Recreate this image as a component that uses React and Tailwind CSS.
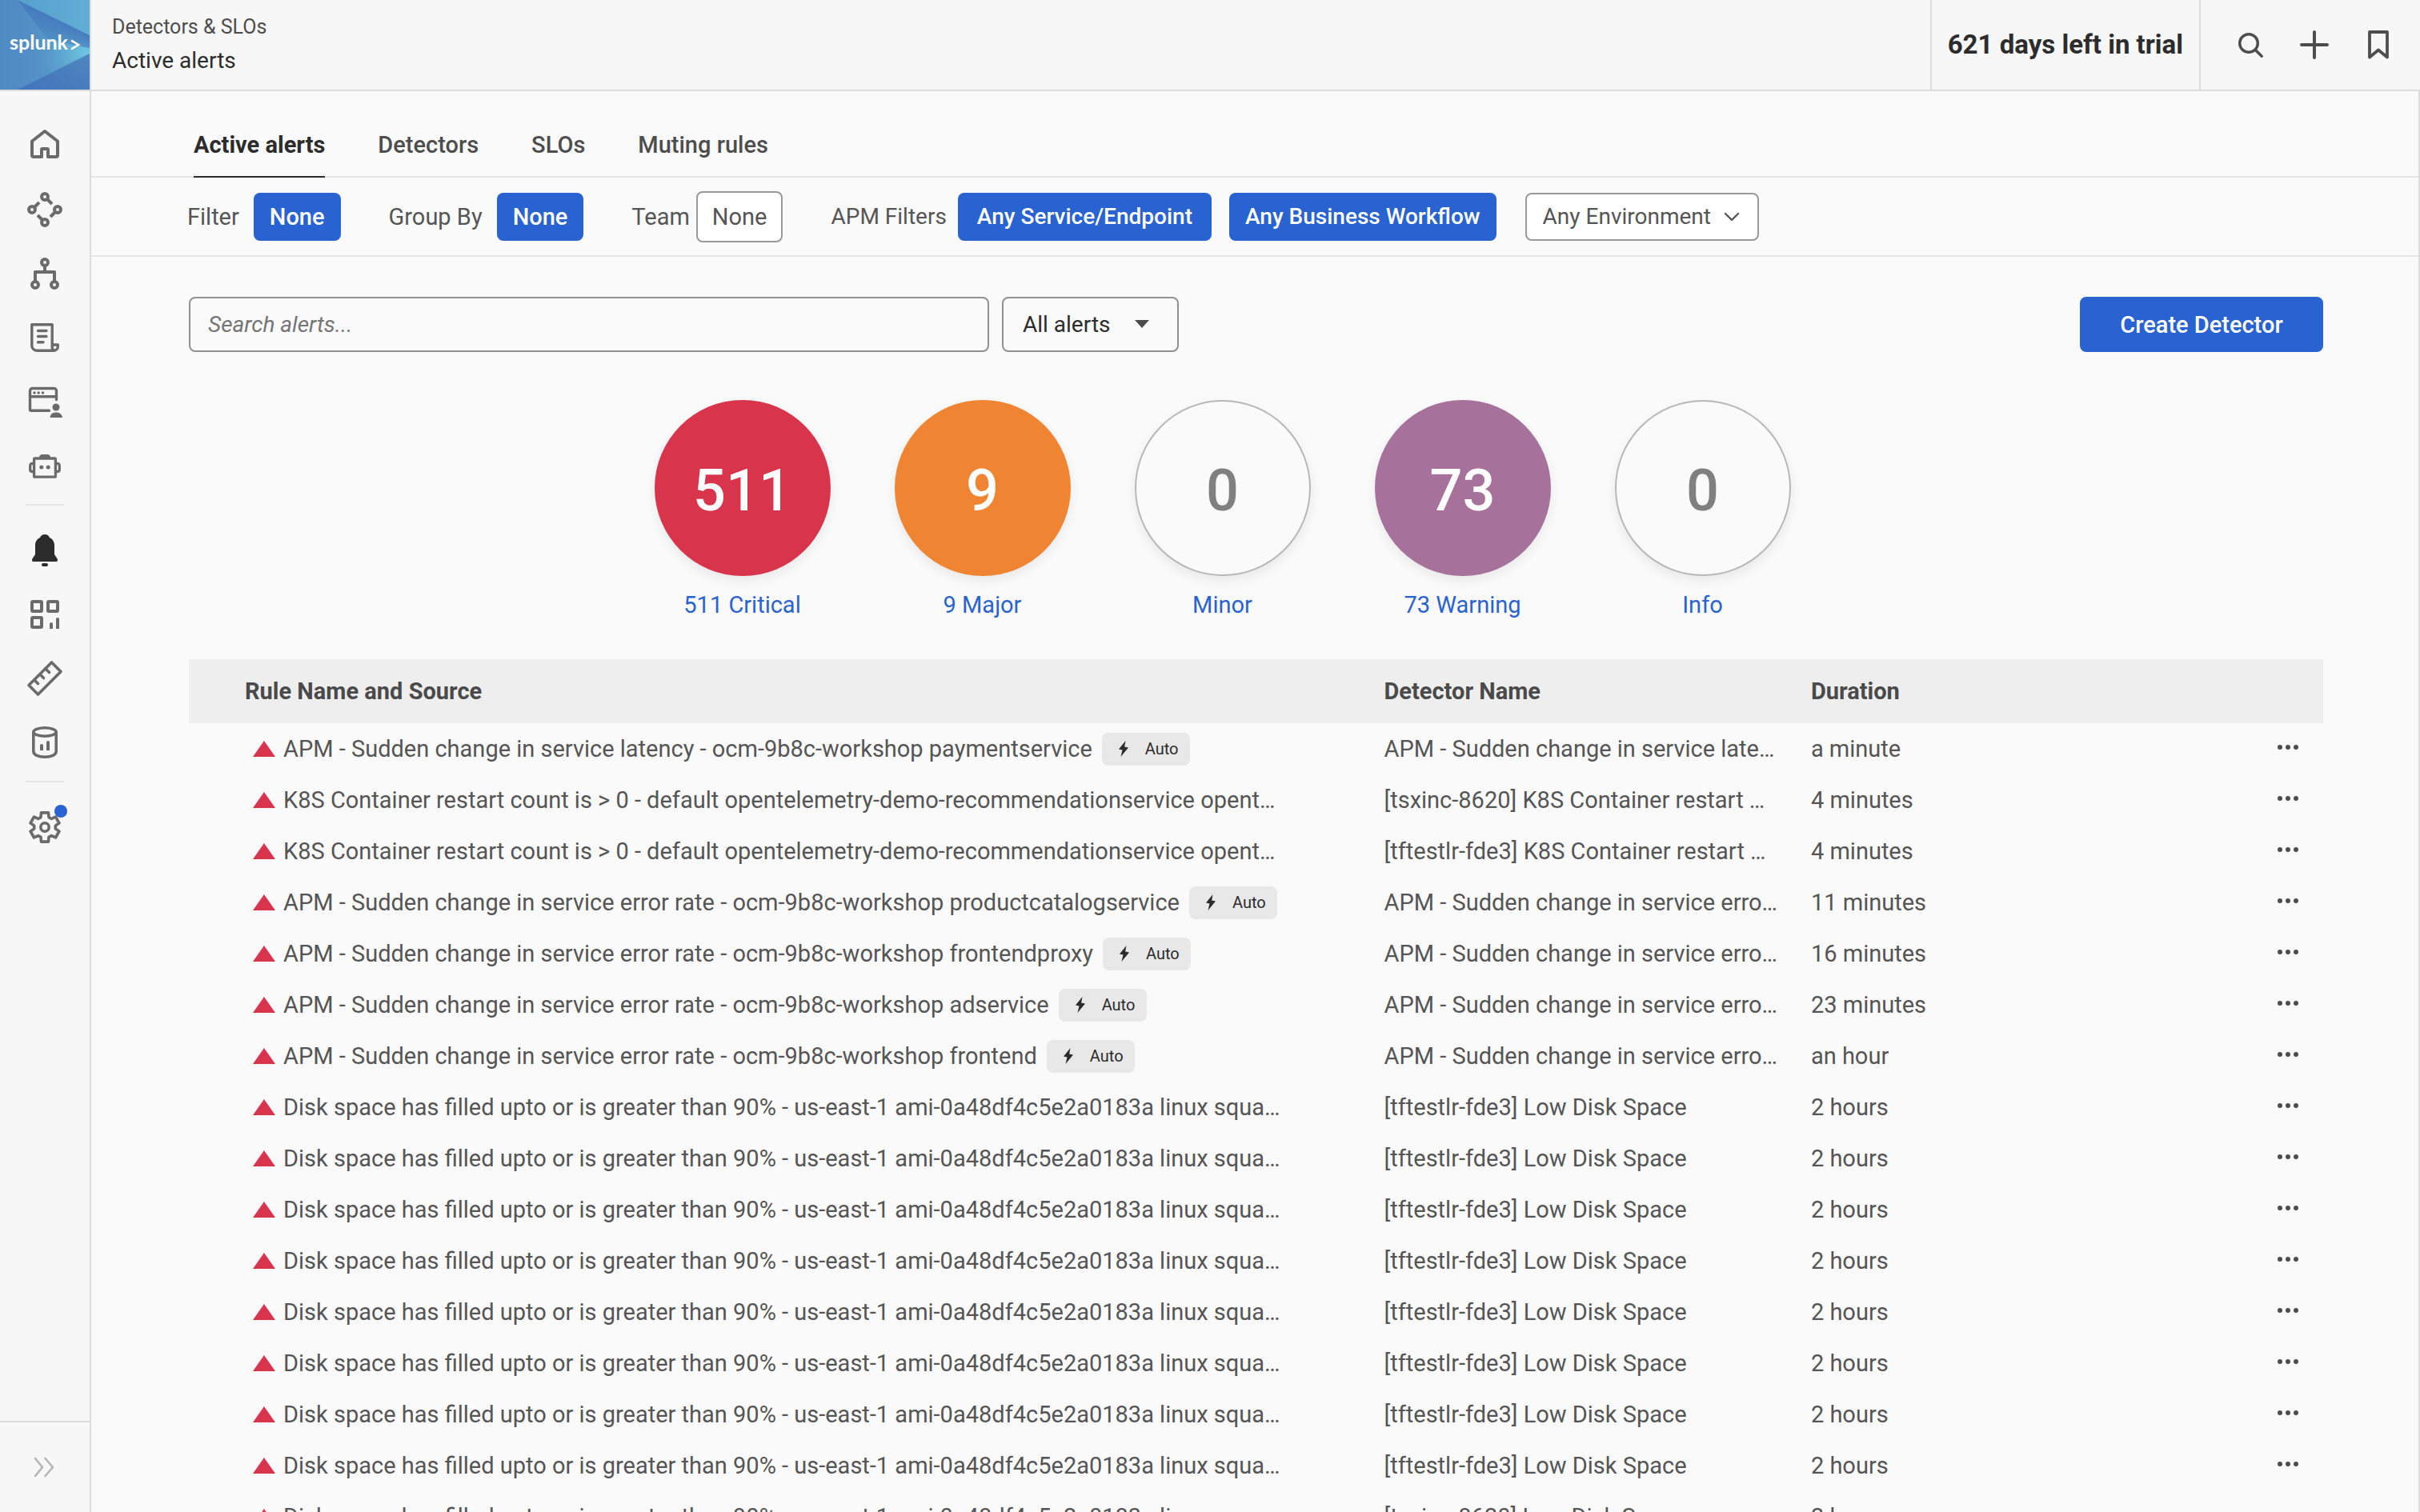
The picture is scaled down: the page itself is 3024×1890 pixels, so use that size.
import React from "react";

const DISK = "Disk space has filled upto or is greater than 90% - us-east-1 ami-0a48df4c5e2a0183a linux squa…";
const K8S = "K8S Container restart count is > 0 - default opentelemetry-demo-recommendationservice opent…";
const ERR = "APM - Sudden change in service error rate - ocm-9b8c-workshop ";
const ERR_DETECTOR = "APM - Sudden change in service erro…";
const LOW_DISK = "[tftestlr-fde3] Low Disk Space";

const alerts = [
  { rule: "APM - Sudden change in service latency - ocm-9b8c-workshop paymentservice", auto: true, detector: "APM - Sudden change in service late…", duration: "a minute" },
  { rule: K8S, detector: "[tsxinc-8620] K8S Container restart …", duration: "4 minutes" },
  { rule: K8S, detector: "[tftestlr-fde3] K8S Container restart …", duration: "4 minutes" },
  { rule: ERR + "productcatalogservice", auto: true, detector: ERR_DETECTOR, duration: "11 minutes" },
  { rule: ERR + "frontendproxy", auto: true, detector: ERR_DETECTOR, duration: "16 minutes" },
  { rule: ERR + "adservice", auto: true, detector: ERR_DETECTOR, duration: "23 minutes" },
  { rule: ERR + "frontend", auto: true, detector: ERR_DETECTOR, duration: "an hour" },
  ...Array.from({ length: 8 }, () => ({ rule: DISK, detector: LOW_DISK, duration: "2 hours" })),
  { rule: DISK, detector: "[tsxinc-8620] Low Disk Space", duration: "2 hours" },
];

const severities = [
  { count: "511", label: "511 Critical", style: "bg-[#d8354c] text-white" },
  { count: "9", label: "9 Major", style: "bg-[#ef8533] text-white" },
  { count: "0", label: "Minor", style: "border-2 border-[#b8b8b8] bg-[#fafafa] text-[#808080]" },
  { count: "73", label: "73 Warning", style: "bg-[#a6729b] text-white" },
  { count: "0", label: "Info", style: "border-2 border-[#b8b8b8] bg-[#fafafa] text-[#808080]" },
];

function Glyph({ children, width = 4 }) {
  return (
    <svg aria-hidden="true" viewBox="0 0 48 48" className="size-12" fill="none" stroke="currentColor" strokeWidth={width} strokeLinejoin="round">
      {children}
    </svg>
  );
}

const gearPoints = Array.from({ length: 6 }, (_, i) =>
  [[-22, 13.4], [-14, 18.7], [14, 18.7], [22, 13.4]].map(([a, r]) => {
    const t = ((i * 60 + a - 90) * Math.PI) / 180;
    return (24 + r * Math.cos(t)).toFixed(2) + "," + (24 + r * Math.sin(t)).toFixed(2);
  }).join(" ")
).join(" ");

const icons = {
  Home: (
    <Glyph>
      <path d="M28 38V29a1 1 0 0 0-1-1h-6a1 1 0 0 0-1 1v9H10a2 2 0 0 1-2-2V18.5L24 6l16 12.5V36a2 2 0 0 1-2 2H28z" />
    </Glyph>
  ),
  APM: (
    <Glyph>
      <circle cx="24" cy="8" r="4" />
      <circle cx="8" cy="24" r="4" />
      <circle cx="40" cy="24" r="4" />
      <circle cx="24" cy="40" r="4" />
      <path d="M27 11l6 6M11 21l6-6M15 31l6 6M37 27l-6 6" />
    </Glyph>
  ),
  Infrastructure: (
    <Glyph>
      <circle cx="24" cy="10" r="4" />
      <circle cx="12" cy="38" r="4" />
      <circle cx="36" cy="38" r="4" />
      <path d="M24 14v8M12 34V22h24v12" />
    </Glyph>
  ),
  "Log Observer": (
    <Glyph width={3.4}>
      <path d="M33.2 33V7.8H7.8V34a6.2 6.2 0 0 0 6.2 6.2h21.5a5 5 0 0 0 4.8-5V33h-7.1v3.2a4 4 0 0 0 3 4" />
      <path strokeLinecap="round" d="M15.5 15.5H26M15.5 22.5H26M15.5 29.7h6.5" />
    </Glyph>
  ),
  RUM: (
    <Glyph width={3.4}>
      <path strokeLinecap="round" d="M29.500 35.200H7a1.500 1.500 0 0 1-1.500-1.500V10.500A3 3 0 0 1 8.500 7.500H35.500a3 3 0 0 1 3 3V21.500M6 17.700H38" />
      <g fill="currentColor" stroke="none">
        <circle cx="11" cy="13" r="1.800" />
        <circle cx="16.200" cy="13" r="1.800" />
        <circle cx="21.500" cy="13" r="1.800" />
        <circle cx="38" cy="31" r="4.500" />
        <path d="M30.500 44c.5-4.500 3.500-6.500 7.500-6.500s7.300 2 8 6.500z" />
      </g>
    </Glyph>
  ),
  Synthetics: (
    <Glyph width={3.3}>
      <rect x="10.600" y="15" width="26.800" height="23.200" rx="1" />
      <path d="M10 21.500H8A2.300 2.300 0 0 0 5.700 24v5.500A2.300 2.300 0 0 0 8 31.500h2M38 21.500h2a2.300 2.300 0 0 1 2.300 2.500v5.500a2.300 2.300 0 0 1-2.300 2h-2" />
      <g fill="currentColor" stroke="none">
        <path d="M17 14.500c0-3 1-4.500 4-4.500h6c3 0 4 1.500 4 4.500z" />
        <circle cx="19.800" cy="26" r="2.500" />
        <circle cx="28.200" cy="26" r="2.500" />
      </g>
    </Glyph>
  ),
  Alerts: (
    <Glyph>
      <g fill="currentColor" stroke="none">
        <path d="M24 4c-2.800 0-5 1.400-6 4-3.600 1.800-6 5-6 9.500V29l-3.500 5.200c-1.200 2-.3 3.800 1.500 3.800h28c1.800 0 2.700-1.800 1.500-3.800L36 29V17.500c0-4.500-2.400-7.700-6-9.500-1-2.600-3.200-4-6-4z" />
        <path d="M22 40h4a2 2 0 0 1 0 4h-4a2 2 0 0 1 0-4z" />
      </g>
    </Glyph>
  ),
  Dashboards: (
    <Glyph>
      <rect x="8" y="8" width="12" height="12" rx="1" />
      <rect x="28" y="8" width="12" height="12" rx="1" />
      <rect x="8" y="28" width="12" height="12" rx="1" />
      <path d="M30 42v-6a2 2 0 0 1 4 0v6zM38 42V30a2 2 0 0 1 4 0v12z" fill="currentColor" stroke="none" />
    </Glyph>
  ),
  "Metric Finder": (
    <Glyph width={3.6}>
      <path d="M32.500 4L44 15.500 15.500 44 4 32.500z" />
      <path strokeLinecap="round" d="M11 26l4.500 4.500M18 19l4.500 4.500M25 12l4.500 4.500" />
    </Glyph>
  ),
  "Data Management": (
    <Glyph width={3.6}>
      <ellipse cx="24" cy="11" rx="14.200" ry="5.200" />
      <path d="M9.800 11v24c0 4.500 6 7.200 14.200 7.200S38.200 39.500 38.200 35V11" />
      <path d="M18 34v-6a2 2 0 0 1 4 0v6zM26 34V24a2 2 0 0 1 4 0v10z" fill="currentColor" stroke="none" />
    </Glyph>
  ),
  Settings: (
    <Glyph width={3.6}>
      <polygon points={gearPoints} />
      <circle cx="24" cy="24" r="5.200" />
    </Glyph>
  ),
};

function NavItem({ name, active, dot }) {
  return (
    <a href="#" aria-label={name} className={"flex h-20 items-center justify-center " + (active ? "text-[#2c2c2c]" : "text-[#6b6b6b]")}>
      <span className="relative">
        {icons[name]}
        {dot && <span className="absolute -top-1 -right-1 size-4 rounded-full bg-[#2962d1]" />}
      </span>
    </a>
  );
}

function Divider() {
  return <hr className="mx-8 mt-2 mb-4 border-t-2 border-[#e5e5e5]" />;
}

function Logo() {
  return (
    <a href="#" aria-label="Splunk home" className="block size-28 shrink-0">
      <svg viewBox="0 0 112 112" className="size-28">
        <defs>
          <linearGradient id="base" x1="0" y1="0" x2="1" y2="0">
            <stop offset="0" stopColor="#4f8bc3" />
            <stop offset="0.35" stopColor="#528fc5" />
            <stop offset="1" stopColor="#5aa5d0" />
          </linearGradient>
          <linearGradient id="shade" gradientUnits="userSpaceOnUse" x1="70" y1="22" x2="50" y2="62">
            <stop offset="0" stopColor="#457bbd" />
            <stop offset="1" stopColor="#457bbd" stopOpacity="0" />
          </linearGradient>
          <radialGradient id="glow" gradientUnits="userSpaceOnUse" cx="108" cy="66" r="62">
            <stop offset="0" stopColor="#6fc6e2" />
            <stop offset="0.4" stopColor="#62b0d6" stopOpacity="0.8" />
            <stop offset="1" stopColor="#5a9acb" stopOpacity="0" />
          </radialGradient>
          <linearGradient id="top" x1="0" y1="0" x2="1" y2="0">
            <stop offset="0" stopColor="#569fcd" />
            <stop offset="1" stopColor="#62add6" />
          </linearGradient>
          <linearGradient id="bottom" x1="0" y1="1" x2="1" y2="0">
            <stop offset="0" stopColor="#4273bb" />
            <stop offset="1" stopColor="#4f87c0" />
          </linearGradient>
        </defs>
        <rect width="112" height="112" fill="url(#base)" />
        <polygon points="22,0 112,44 112,67 22,112" fill="url(#glow)" />
        <polygon points="22,0 112,44 112,60 60,50" fill="url(#shade)" />
        <polygon points="22,0 112,0 112,44" fill="url(#top)" />
        <polygon points="22,112 112,67 112,112" fill="url(#bottom)" />
        <text x="12" y="62" fill="white" fontFamily="Lato, sans-serif" fontSize="25" fontWeight="700">splunk</text>
        <path d="M89 50.500l9 5.500-9 5.500" fill="none" stroke="white" strokeWidth="2.600" />
      </svg>
    </a>
  );
}

function PrimaryButton({ children, className = "h-15 px-5" }) {
  return <button type="button" className={"rounded-lg bg-[#2962d1] font-medium text-white " + className}>{children}</button>;
}

export default function App() {
  return (
    <div className="flex h-screen overflow-hidden bg-[#fafafa] text-[29px] leading-9 text-[#555] [font-family:Roboto,sans-serif]">
      <aside className="flex w-[114px] shrink-0 flex-col border-r-2 border-[#dcdcdc] bg-[#f7f7f7]">
        <Logo />
        <nav aria-label="Main" className="grow border-t-2 border-[#dcdcdc] pt-7">
          {["Home", "APM", "Infrastructure", "Log Observer", "RUM", "Synthetics"].map((n) => <NavItem key={n} name={n} />)}
          <Divider />
          <NavItem name="Alerts" active />
          {["Dashboards", "Metric Finder", "Data Management"].map((n) => <NavItem key={n} name={n} />)}
          <Divider />
          <NavItem name="Settings" dot />
        </nav>
        <button type="button" aria-label="Expand menu" className="flex h-[114px] items-center justify-center border-t-2 border-[#dcdcdc] text-[#b5b5b5]">
          <svg viewBox="0 0 28 28" className="size-7" fill="none" stroke="currentColor" strokeWidth="2.600" strokeLinecap="round" strokeLinejoin="round">
            <path d="M2 3l9 11-9 11M14.500 3l9.500 11-9.500 11" />
          </svg>
        </button>
      </aside>

      <div className="flex min-w-0 grow flex-col">
        <header className="flex h-[114px] shrink-0 border-b-2 border-[#dcdcdc] bg-[#f7f7f7]">
          <div className="flex grow flex-col gap-1.5 pt-4 pl-[26px]">
            <a href="#" className="text-[25px] leading-9 text-[#4d4d4d]">Detectors &amp; SLOs</a>
            <h1 className="text-[28px] text-[#2c2c2c]">Active alerts</h1>
          </div>
          <div className="flex items-center border-x-2 border-[#dcdcdc] px-5 text-[33px] font-bold text-[#2c2c2c]">621 days left in trial</div>
          <div className="flex items-center gap-8 pr-7 pl-[38px] text-[#4d4d4d]">
            <button type="button" aria-label="Search">
              <svg viewBox="0 0 48 48" className="size-12" fill="none" stroke="currentColor" strokeWidth="3.400" strokeLinecap="round">
                <circle cx="22" cy="22" r="11.300" />
                <path d="M30.200 30.200l8 8" />
              </svg>
            </button>
            <button type="button" aria-label="Add">
              <svg viewBox="0 0 48 48" className="size-12" fill="none" stroke="currentColor" strokeWidth="4" strokeLinecap="round">
                <path d="M24 8v32M8 24h32" />
              </svg>
            </button>
            <button type="button" aria-label="Bookmark">
              <svg viewBox="0 0 48 48" className="size-12" fill="none" stroke="currentColor" strokeWidth="3.800" strokeLinejoin="round">
                <path d="M13 8h22v31.500l-11-9-11 9z" />
              </svg>
            </button>
          </div>
        </header>

        <main className="flex min-h-0 grow flex-col overflow-hidden border-r-2 border-[#dcdcdc]">
          <nav aria-label="Alert views" className="flex h-[108px] shrink-0 gap-[66px] border-b-2 border-[#e5e5e5] pl-32 font-medium">
            <a href="#" aria-current="page" className="-mb-[2px] flex items-center border-b-2 border-[#2c2c2c] pt-7 font-bold text-[#2c2c2c]">Active alerts</a>
            <a href="#" className="flex items-center pt-7 text-[#4d4d4d]">Detectors</a>
            <a href="#" className="flex items-center pt-7 text-[#4d4d4d]">SLOs</a>
            <a href="#" className="flex items-center pt-7 text-[#4d4d4d]">Muting rules</a>
          </nav>

          <div className="flex h-[99px] shrink-0 items-center gap-15 border-b-2 border-[#e5e5e5] pl-[120px]">
            <div className="flex items-center gap-[18px]"><span>Filter</span><PrimaryButton>None</PrimaryButton></div>
            <div className="flex items-center gap-[18px]"><span>Group By</span><PrimaryButton>None</PrimaryButton></div>
            <div className="flex items-center gap-2">
              <span>Team</span>
              <button type="button" className="h-16 rounded-lg border-2 border-[#999] bg-white px-[18px]">None</button>
            </div>
            <div className="flex items-center text-[28px]">
              <span>APM Filters</span>
              <PrimaryButton className="ml-[14px] h-15 px-6">Any Service/Endpoint</PrimaryButton>
              <PrimaryButton className="ml-[22px] h-15 px-5">Any Business Workflow</PrimaryButton>
              <div className="relative ml-9">
                <select aria-label="Environment" className="h-15 w-[292px] appearance-none rounded-lg border-2 border-[#999] bg-white px-5">
                  <option>Any Environment</option>
                </select>
                <svg viewBox="0 0 20 20" className="pointer-events-none absolute top-5 right-6 size-5" fill="none" stroke="currentColor" strokeWidth="2.400" strokeLinecap="round" strokeLinejoin="round">
                  <path d="M2 6l8 8 8-8" />
                </svg>
              </div>
            </div>
          </div>

          <div className="flex flex-col pt-[50px] pr-[119px] pl-[122px]">
            <div className="flex gap-4">
              <input type="text" aria-label="Search alerts" placeholder="Search alerts..." className="h-[69px] w-[1000px] rounded-lg border-2 border-[#909090] px-[22px] text-[28px] italic placeholder:text-[#757575]" />
              <div className="relative">
                <select aria-label="Alert scope" className="h-[69px] w-[221px] appearance-none rounded-lg border-2 border-[#909090] px-6 text-[28px] text-[#2c2c2c]">
                  <option>All alerts</option>
                </select>
                <svg viewBox="0 0 18 10" className="pointer-events-none absolute top-[29px] right-[37px] h-[10px] w-[18px] text-[#4d4d4d]" fill="currentColor">
                  <path d="M0 0h18L9 10z" />
                </svg>
              </div>
              <PrimaryButton className="ml-auto h-[69px] w-[304px]">Create Detector</PrimaryButton>
            </div>

            <div className="mt-15 flex justify-center gap-20 pr-21">
              {severities.map((s) => (
                <a href="#" key={s.label} className="flex w-[220px] flex-col items-center gap-[18px] text-[#2962d1]">
                  <span className={"flex size-[220px] items-center justify-center rounded-full pt-2 text-[72px] leading-none font-medium shadow-[0_6px_14px_rgba(0,0,0,0.07)] " + s.style}>{s.count}</span>
                  <span>{s.label}</span>
                </a>
              ))}
            </div>

            <table className="mt-[50px] w-full table-fixed">
              <thead className="bg-[#eee] text-left text-[#4a4a4a]">
                <tr className="h-20">
                  <th className="w-[56%] pl-[70px] font-bold">Rule Name and Source</th>
                  <th className="w-[20%] font-bold">Detector Name</th>
                  <th className="font-bold">Duration</th>
                  <th className="w-[10%]" aria-label="Actions" />
                </tr>
              </thead>
              <tbody>
                {alerts.map((a, i) => (
                  <tr key={i} className="h-16">
                    <td className="p-0 pl-20">
                      <div className="flex items-center whitespace-nowrap">
                        <svg aria-label="Critical" viewBox="0 0 28 20" className="mr-[10px] h-5 w-7 shrink-0 text-[#d8354c]" fill="currentColor">
                          <path d="M14 0l14 20H0z" />
                        </svg>
                        <span>{a.rule}</span>
                        {a.auto && (
                          <span className="ml-3 flex h-[41px] w-[110px] items-center gap-5 rounded-lg bg-[#e8e8e8] pl-5 text-xl text-[#2c2c2c]">
                            <svg aria-hidden="true" viewBox="0 0 14 20" className="h-5 w-[14px]" fill="currentColor">
                              <path d="M9.500 0L1 10.500l4.500 1L3.500 20 13 8.500l-4.800-1z" />
                            </svg>
                            Auto
                          </span>
                        )}
                      </div>
                    </td>
                    <td className="p-0 whitespace-nowrap">{a.detector}</td>
                    <td className="p-0 whitespace-nowrap">{a.duration}</td>
                    <td className="p-0 pr-[31px] pb-1">
                      <button type="button" aria-label="Alert actions" className="ml-auto block text-[#4d4d4d]">
                        <svg viewBox="0 0 26 6" className="h-[6px] w-[26px]" fill="currentColor">
                          <circle cx="3" cy="3" r="3" />
                          <circle cx="13" cy="3" r="3" />
                          <circle cx="23" cy="3" r="3" />
                        </svg>
                      </button>
                    </td>
                  </tr>
                ))}
              </tbody>
            </table>
          </div>
        </main>
      </div>
    </div>
  );
}
